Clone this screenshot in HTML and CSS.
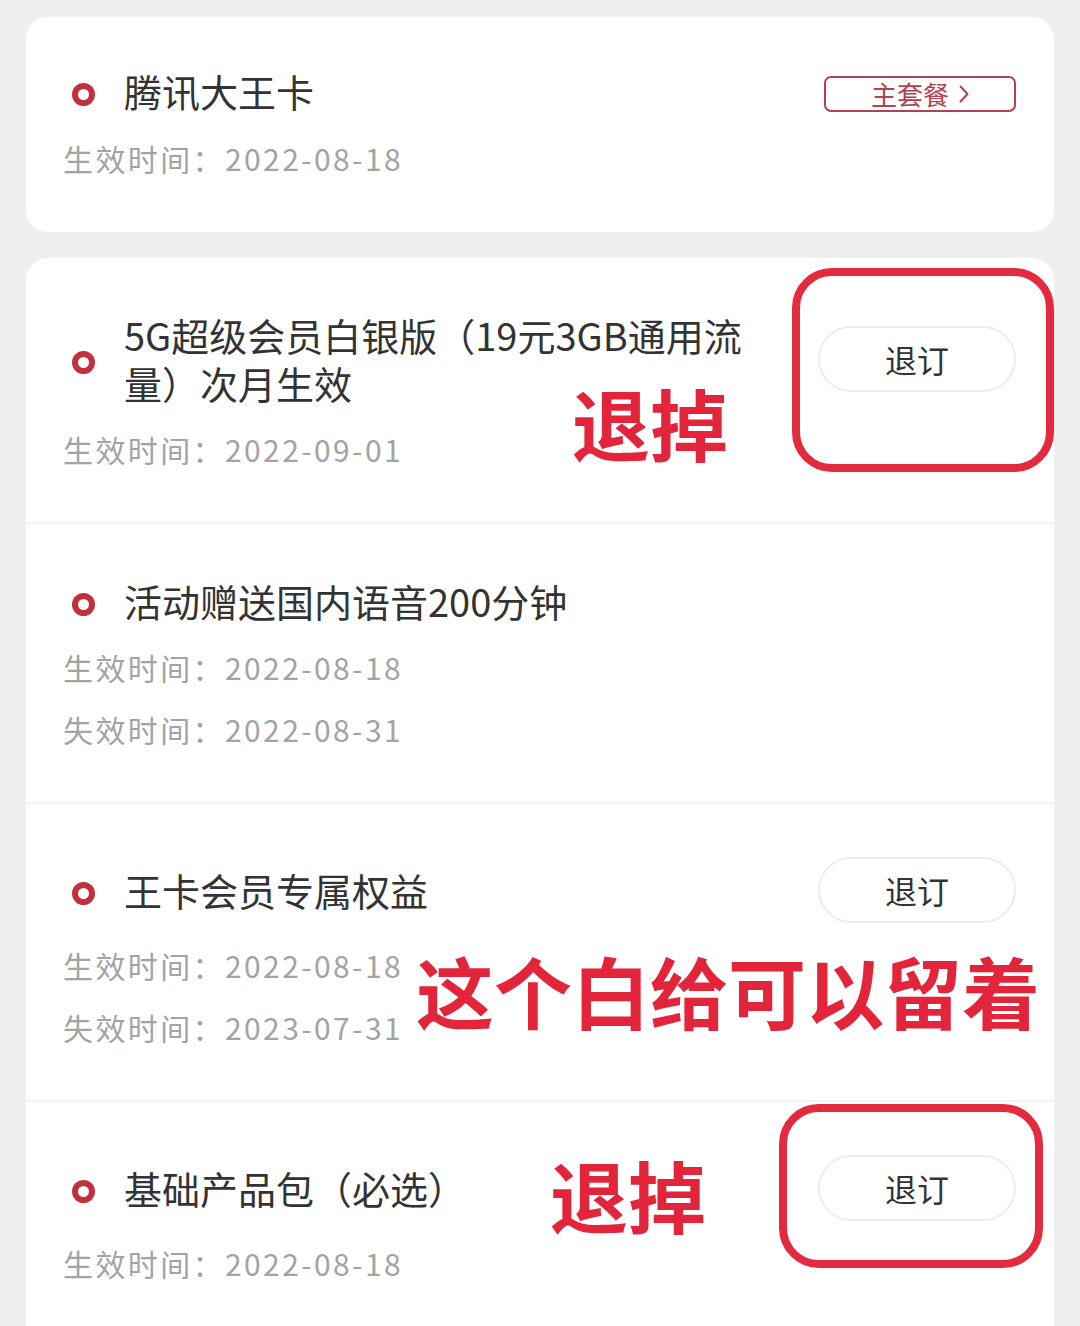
FILE: index.html
```html
<!DOCTYPE html>
<html lang="zh-CN">
<head>
<meta charset="utf-8">
<title>套餐</title>
<link rel="stylesheet" href="styles.css">
</head>
<body>
<div class="page">
  <section class="card card-main">
    <div class="row row-first">
      <div class="head">
        <span class="dot"></span>
        <span class="title">腾讯大王卡</span>
        <span class="tag">主套餐<svg class="chev" width="10" height="18" viewBox="0 0 10 18"><path d="M1.5 1.5 L8.5 9 L1.5 16.5" fill="none" stroke="#b3404d" stroke-width="2" stroke-linecap="round" stroke-linejoin="round"/></svg></span>
      </div>
      <div class="date">生效时间：2022-08-18</div>
    </div>
  </section>

  <section class="card card-list">
    <div class="row">
      <div class="head">
        <span class="dot"></span>
        <span class="title">5G超级会员白银版（19元3GB通用流量）次月生效</span>
        <span class="btn">退订</span>
      </div>
      <div class="date">生效时间：2022-09-01</div>
    </div>
    <div class="row">
      <div class="head">
        <span class="dot"></span>
        <span class="title">活动赠送国内语音200分钟</span>
      </div>
      <div class="date">生效时间：2022-08-18</div>
      <div class="date">失效时间：2022-08-31</div>
    </div>
    <div class="row">
      <div class="head">
        <span class="dot"></span>
        <span class="title">王卡会员专属权益</span>
        <span class="btn">退订</span>
      </div>
      <div class="date">生效时间：2022-08-18</div>
      <div class="date">失效时间：2023-07-31</div>
    </div>
    <div class="row">
      <div class="head">
        <span class="dot"></span>
        <span class="title">基础产品包（必选）</span>
        <span class="btn">退订</span>
      </div>
      <div class="date">生效时间：2022-08-18</div>
    </div>
  </section>

  <div class="mark box box-1"></div>
  <div class="mark note note-1">退掉</div>
  <div class="mark note note-2">这个白给可以留着</div>
  <div class="mark note note-3">退掉</div>
  <div class="mark box box-2"></div>
</div>
</body>
</html>
```

FILE: styles.css
```css
html, body {
  margin: 0;
  padding: 0;
  background: #efefef;
}
body {
  font-family: "Noto Sans CJK SC", "Noto Sans", sans-serif;
  color: #333;
  overflow: hidden;
  height: 1326px;
}
.page {
  position: relative;
  padding: 17px 26px 0;
  display: flex;
  flex-direction: column;
  gap: 26px;
}
.card {
  background: #fff;
  border-radius: 22px;
}
.card-list {
  border-radius: 22px 22px 0 0;
  min-height: 1100px;
}
.row {
  padding: 53px 38px 42px 37px;
  border-bottom: 2px solid #f3f3f3;
}
.row .head {
  margin-bottom: 11px;
}
.row:last-child {
  border-bottom: none;
}
.row-first {
  padding-top: 50px;
  padding-bottom: 43px;
  border-bottom: none;
}
.row-first .head {
  margin-bottom: 12px;
}
.head {
  display: flex;
  align-items: center;
}
.dot {
  flex: none;
  box-sizing: border-box;
  width: 23px;
  height: 23px;
  border-radius: 50%;
  border: 6px solid #c2303d;
  margin-left: 9px;
  margin-right: 29px;
  margin-top: 6px;
}
.title {
  flex: 1;
  font-size: 38px;
  line-height: 48px;
  color: #333;
}
.date {
  font-size: 30px;
  line-height: 62px;
  color: #a3a3a3;
  letter-spacing: 2.4px;
}
.btn {
  flex: none;
  box-sizing: border-box;
  width: 198px;
  height: 66px;
  margin-left: 40px;
  border: 2px solid #ececec;
  border-radius: 33px;
  display: flex;
  align-items: center;
  justify-content: center;
  font-size: 32px;
  color: #333;
  background: #fff;
}
.tag {
  flex: none;
  box-sizing: border-box;
  width: 192px;
  height: 36px;
  margin-top: 6px;
  border: 2px solid #b3404d;
  border-radius: 7px;
  display: flex;
  align-items: center;
  justify-content: center;
  font-size: 26px;
  color: #b3404d;
  line-height: 1;
  gap: 10px;
}
.chev {
  flex: none;
}
.mark {
  position: absolute;
}
.box {
  box-sizing: border-box;
  border: 8px solid #e32a3e;
  border-radius: 40px;
}
.box-1 {
  left: 792px;
  top: 268px;
  width: 262px;
  height: 204px;
}
.box-2 {
  left: 779px;
  top: 1104px;
  width: 264px;
  height: 164px;
}
.note {
  color: #e3253b;
  font-weight: 700;
  line-height: 1;
  white-space: nowrap;
}
.note-1 {
  left: 572px;
  top: 383px;
  font-size: 78px;
}
.note-2 {
  left: 416px;
  top: 951px;
  font-size: 78px;
}
.note-3 {
  left: 550px;
  top: 1155px;
  font-size: 78px;
}
```
